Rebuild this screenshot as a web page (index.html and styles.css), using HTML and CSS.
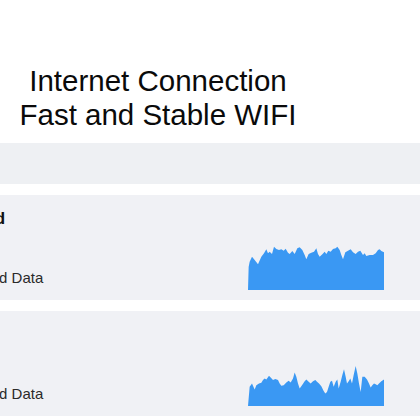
FILE: index.html
```html
<!DOCTYPE html>
<html lang="en">
<head>
<meta charset="utf-8">
<title>Internet Connection</title>
<link rel="stylesheet" href="styles.css">
</head>
<body>
<div class="page">
  <header class="hero">
    <h1 class="hero-title">Internet Connection<br>Fast and Stable WIFI</h1>
  </header>
  <div class="band"></div>
  <section class="card">
    <div class="card-text">
      <div class="card-title">Download</div>
      <div class="card-sub">Downloaded Data</div>
    </div>
    <svg class="chart chart-a" viewBox="55 45 408 135" preserveAspectRatio="none">
      <polygon fill="#3a98f3" points="55,180 57,110 60,95 67,80 75,90 85,103 95,80 103,70 110,58 115,70 120,65 127,72 133,50 140,57 148,60 155,58 162,62 168,56 175,68 180,72 188,63 195,72 203,55 210,52 218,60 225,75 230,88 237,72 245,68 253,65 260,55 265,72 270,80 278,73 285,65 290,72 296,62 303,65 310,57 318,55 323,50 330,60 335,75 340,88 347,67 355,62 363,58 370,67 378,72 385,65 392,62 400,75 405,70 410,78 420,75 430,75 438,70 445,60 450,58 455,63 463,67 463,180"/>
    </svg>
  </section>
  <section class="card">
    <div class="card-text">
      <div class="card-title">Upload</div>
      <div class="card-sub">Total Upload Data</div>
    </div>
    <svg class="chart chart-b" viewBox="55 45 408 122" preserveAspectRatio="none">
      <polygon fill="#3a98f3" points="55,167 60,110 67,100 75,118 80,105 88,100 95,98 100,90 105,85 110,88 118,77 123,82 130,90 137,87 145,90 150,100 155,107 162,105 170,97 177,92 183,97 190,85 195,67 200,80 205,100 210,115 217,105 225,93 230,88 237,95 243,100 250,93 257,90 262,95 268,100 275,108 282,122 287,130 292,125 297,110 302,95 307,92 312,110 318,95 323,88 327,115 333,95 338,75 343,58 348,80 352,100 357,93 362,85 367,100 372,75 378,48 383,70 388,100 393,125 398,80 405,80 412,88 418,100 423,112 428,105 433,100 438,102 443,105 448,100 455,93 463,88 463,167"/>
    </svg>
  </section>
</div>
</body>
</html>
```
FILE: styles.css
```css
html, body {
  margin: 0;
  padding: 0;
  background: #ffffff;
  overflow: hidden;
}

body {
  font-family: "Liberation Sans", Arial, sans-serif;
  color: #111;
}

.page {
  width: 524px;
  margin-left: -104px;
}

.hero {
  padding: 64px 0 11px;
}

.hero-title {
  margin: 0;
  font-weight: 400;
  font-size: 29.5px;
  line-height: 34px;
  text-align: center;
  color: #0a0a0a;
}

.band {
  height: 41px;
  background: #eef0f3;
  margin-bottom: 11px;
}

.card {
  display: flex;
  justify-content: space-between;
  height: 105px;
  box-sizing: border-box;
  padding: 14px 36px 10px 28px;
  background: #f0f1f5;
  margin-bottom: 11px;
}

.card-text {
  display: flex;
  flex-direction: column;
  justify-content: space-between;
  padding-bottom: 3px;
}

.card-title {
  font-weight: 700;
  font-size: 17px;
  line-height: 20px;
  color: #111;
}

.card-sub {
  font-size: 15px;
  line-height: 18px;
  color: #2a2a2a;
}

.chart {
  display: block;
  align-self: flex-end;
  width: 136px;
}

.chart-a {
  height: 45px;
}

.chart-b {
  height: 41px;
}
```
